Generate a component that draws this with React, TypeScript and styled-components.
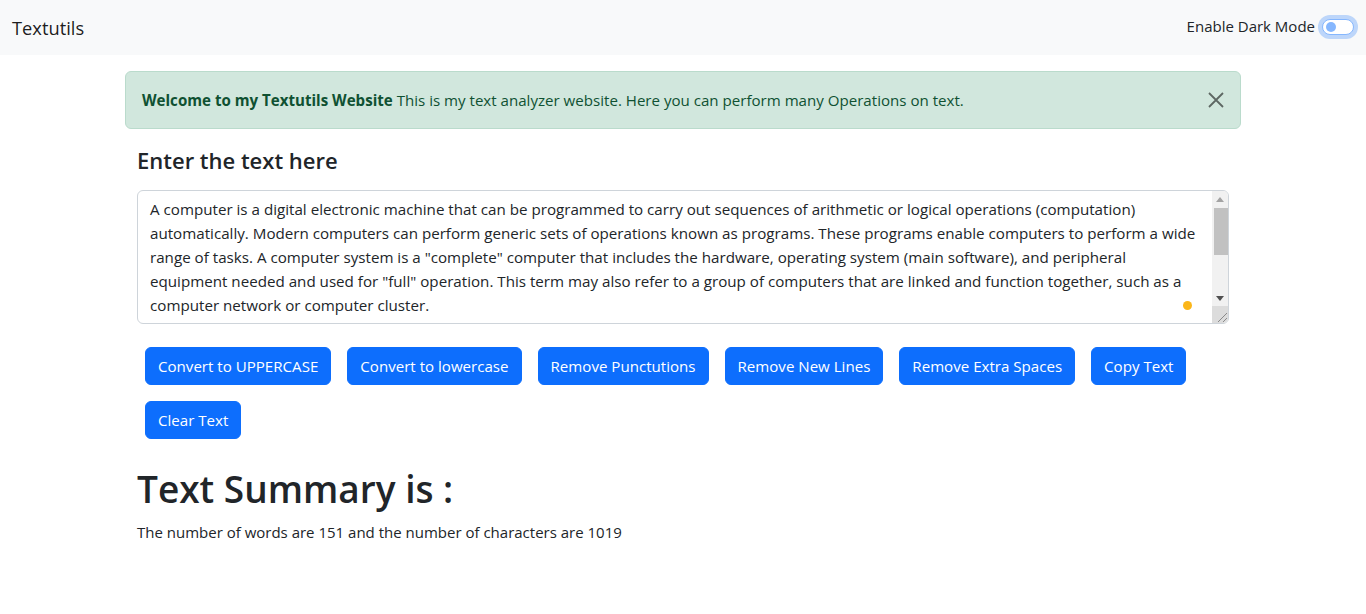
import React, { useState } from 'react';
import styled, { createGlobalStyle } from 'styled-components';

const GlobalStyle = createGlobalStyle`
  * { box-sizing: border-box; }
  body {
    margin: 0;
    font-family: "Open Sans", "Noto Sans", sans-serif;
    font-size: 16px;
    line-height: 1.5;
    color: #212529;
    background: #fff;
  }
`

const Navbar = styled.nav`
  display: flex;
  align-items: center;
  justify-content: space-between;
  height: 55px;
  padding: 0 12px;
  background-color: #f8f9fa;
`

const Brand = styled.span`
  font-size: 18.3px;
  color: rgba(0, 0, 0, .9);
`

const SwitchWrap = styled.label`
  display: flex;
  align-items: center;
  gap: 7px;
  font-size: 15px;
  color: #212529;
  margin-top: -2px;
`

const Switch = styled.span<{ on: boolean }>`
  position: relative;
  width: 32px;
  height: 16px;
  border-radius: 8px;
  border: 1px solid #86b7fe;
  background: ${p => (p.on ? '#0d6efd' : '#fff')};
  box-shadow: 0 0 0 4px rgba(13, 110, 253, .25);
  &::after {
    content: '';
    position: absolute;
    top: 2px;
    left: ${p => (p.on ? '17px' : '3px')};
    width: 10px;
    height: 10px;
    border-radius: 50%;
    background: ${p => (p.on ? '#fff' : '#86b7fe')};
  }
`

const Container = styled.div`
  width: 1140px;
  margin: 16px auto 0;
  padding: 0 12px;
`

const Alert = styled.div`
  position: relative;
  padding: 16px 48px 16px 16px;
  background: #d1e7dd;
  border: 1px solid #badbcc;
  border-radius: 6px;
  color: #0f5132;
  font-size: 15.1px;
  line-height: 24px;
  strong { font-weight: 700; }
`

const CloseButton = styled.button`
  position: absolute;
  top: 0;
  right: 0;
  height: 100%;
  padding: 0 16px;
  border: 0;
  background: transparent;
  opacity: .55;
  display: flex;
  align-items: center;
  cursor: pointer;
`

const Section = styled.div`
  padding: 0 12px;
  margin-top: 18px;
`

const Heading = styled.h2`
  margin: 0 0 8px;
  font-size: 22px;
  font-weight: 600;
  line-height: 1.2;
`

const AreaWrap = styled.div`
  position: relative;
  margin: 17px 0 15px;
`

const TextArea = styled.textarea`
  display: block;
  width: 100%;
  height: 134px;
  padding: 6px 29px 6px 12px;
  border: 1px solid #ced4da;
  border-radius: 6px;
  font-family: "Open Sans", "Noto Sans", sans-serif;
  font-size: 15.17px;
  line-height: 24px;
  color: #212529;
  resize: vertical;
  outline: none;
  overflow: hidden;
`

/* scrollbar drawn over the textarea's right edge */
const ScrollBar = styled.div`
  position: absolute;
  top: 1px;
  right: 1px;
  bottom: 1px;
  width: 16px;
  display: flex;
  flex-direction: column;
  background: #f1f1f1;
  border-top-right-radius: 5px;
  border-bottom-right-radius: 5px;
  pointer-events: none;
`

const Arrow = styled.div`
  height: 16px;
  display: flex;
  align-items: center;
  justify-content: center;
`

const Track = styled.div`
  flex: 1;
  padding: 1px 0 0 2px;
`

const Thumb = styled.div`
  height: 47px;
  background: #c1c1c1;
`

const Corner = styled.div`
  height: 17px;
  background: #dcdcdc;
  display: flex;
  align-items: flex-end;
  justify-content: flex-end;
  border-bottom-right-radius: 5px;
`

const Dot = styled.span`
  position: absolute;
  right: 37px;
  bottom: 14px;
  width: 9px;
  height: 9px;
  border-radius: 50%;
  background: #fbb619;
`

const ButtonRow = styled.div`
  display: flex;
  flex-wrap: wrap;
  padding: 0 12px;
`

const Button = styled.button`
  margin: 8px;
  padding: 6px 12px;
  height: 38px;
  border: 1px solid #0d6efd;
  border-radius: 6px;
  background: #0d6efd;
  color: #fff;
  font-family: "Open Sans", "Noto Sans", sans-serif;
  font-size: 15.1px;
  line-height: 24px;
  cursor: pointer;
`

const Summary = styled.div`
  padding: 0 12px;
  margin-top: 18px;
`

const Title = styled.h1`
  margin: 0 0 8px;
  font-size: 37px;
  font-weight: 600;
  line-height: 48px;
`

const Para = styled.p`
  margin: 0;
  font-size: 15px;
`

const initial = `A computer is a digital electronic machine that can be programmed to carry out sequences of arithmetic or logical operations (computation) automatically. Modern computers can perform generic sets of operations known as programs. These programs enable computers to perform a wide range of tasks. A computer system is a "complete" computer that includes the hardware, operating system (main software), and peripheral equipment needed and used for "full" operation. This term may also refer to a group of computers that are linked and function together, such as a computer network or computer cluster.
A broad range of industrial and consumer products use computers as control systems. Simple special-purpose devices like microwave ovens and remote controls are included, as are factory devices like industrial robots and computer-aided design, as well as general-purpose devices like personal computers and mobile devices like smartphones. Computers power the Internet, which links billions of other computers and users.`

const buttons = [
  'Convert to UPPERCASE',
  'Convert to lowercase',
  'Remove Punctutions',
  'Remove New Lines',
  'Remove Extra Spaces',
  'Copy Text',
  'Clear Text',
]

export default function App() {
  const [text, setText] = useState(initial);
  const [dark, setDark] = useState(false);

  return (
    <>
      <GlobalStyle />
      <Navbar>
        <Brand>Textutils</Brand>
        <SwitchWrap onClick={() => setDark(!dark)}>
          Enable Dark Mode
          <Switch on={dark} />
        </SwitchWrap>
      </Navbar>
      <Container>
        <Alert>
          <strong>Welcome to my Textutils Website</strong> This is my text analyzer website. Here you can perform many Operations on text.
          <CloseButton aria-label="Close">
            <svg width="16" height="16" viewBox="0 0 16 16">
              <path d="M1 1L15 15M15 1L1 15" stroke="#000" strokeWidth="1.8" fill="none" />
            </svg>
          </CloseButton>
        </Alert>
        <Section>
          <Heading>Enter the text here</Heading>
          <AreaWrap>
            <TextArea value={text} onChange={e => setText(e.target.value)} />
            <Dot />
            <ScrollBar>
              <Arrow>
                <svg width="8" height="5" viewBox="0 0 8 5"><path d="M0 5L4 0L8 5Z" fill="#a3a3a3" /></svg>
              </Arrow>
              <Track><Thumb /></Track>
              <Arrow>
                <svg width="8" height="5" viewBox="0 0 8 5"><path d="M0 0L8 0L4 5Z" fill="#505050" /></svg>
              </Arrow>
              <Corner>
                <svg width="12" height="12" viewBox="0 0 12 12">
                  <path d="M2 11L11 2M7 11L11 7" stroke="#8a8a8a" strokeWidth="1" fill="none" />
                </svg>
              </Corner>
            </ScrollBar>
          </AreaWrap>
        </Section>
        <ButtonRow>
          {buttons.map(b => <Button key={b}>{b}</Button>)}
        </ButtonRow>
        <Summary>
          <Title>Text Summary is :</Title>
          <Para>The number of words are 151 and the number of characters are 1019</Para>
        </Summary>
      </Container>
    </>
  );
}
